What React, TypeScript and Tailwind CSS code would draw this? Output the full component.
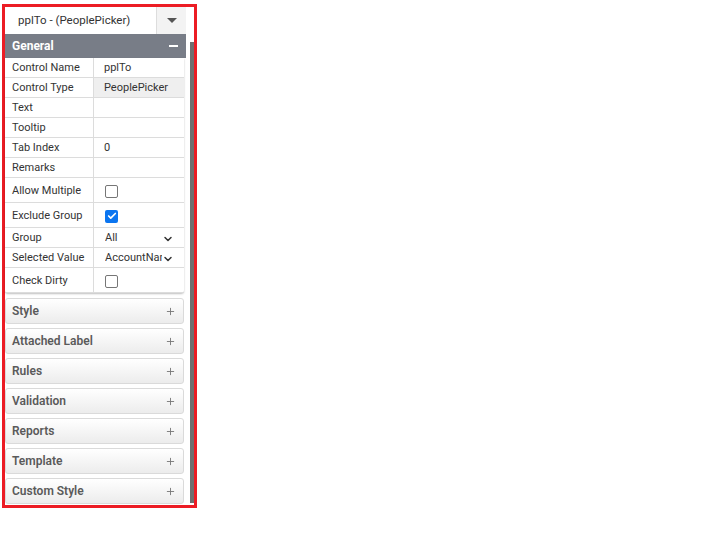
import { Check, ChevronDown, Plus } from 'lucide-react';

type Row = {
  label: string;
  kind: 'text' | 'readonly' | 'check' | 'select';
  value?: string;
  checked?: boolean;
};

const rows: Row[] = [
  { label: 'Control Name', kind: 'text', value: 'pplTo' },
  { label: 'Control Type', kind: 'readonly', value: 'PeoplePicker' },
  { label: 'Text', kind: 'text', value: '' },
  { label: 'Tooltip', kind: 'text', value: '' },
  { label: 'Tab Index', kind: 'text', value: '0' },
  { label: 'Remarks', kind: 'text', value: '' },
  { label: 'Allow Multiple', kind: 'check', checked: false },
  { label: 'Exclude Group', kind: 'check', checked: true },
  { label: 'Group', kind: 'select', value: 'All' },
  { label: 'Selected Value', kind: 'select', value: 'AccountName' },
  { label: 'Check Dirty', kind: 'check', checked: false },
];

const sections = ['Style', 'Attached Label', 'Rules', 'Validation', 'Reports', 'Template', 'Custom Style'];

function Value({ row }: { row: Row }) {
  if (row.kind === 'check') {
    return (
      <div className="flex items-center px-[11px] pt-[2px] h-full">
        {row.checked ? (
          <span className="w-[13px] h-[13px] rounded-[2px] bg-[#0b75f0] flex items-center justify-center">
            <Check size={10} strokeWidth={4} className="text-white" />
          </span>
        ) : (
          <span className="w-[13px] h-[13px] rounded-[2px] border border-[#767676] bg-white" />
        )}
      </div>
    );
  }
  if (row.kind === 'select') {
    return (
      <div className="flex items-center h-full pl-[11px] pr-[10px] pt-[2px]">
        <span className="flex-1 min-w-0 whitespace-nowrap overflow-hidden">{row.value}</span>
        <ChevronDown size={12} strokeWidth={3} className="text-[#333] shrink-0" />
      </div>
    );
  }
  return (
    <div className={`flex items-center h-full px-[10px] pt-[2px] ${row.kind === 'readonly' ? 'bg-[#efefef]' : ''}`}>
      {row.value}
    </div>
  );
}

export default function App() {
  return (
    <div className="pt-[4px] pl-[2px] font-['Roboto',sans-serif]">
      <div className="w-[195px] h-[504px] border-[3px] border-[#ec1c24] bg-white flex">
        <div className="w-[181px] flex flex-col">
          {/* control picker */}
          <div className="h-[27px] flex bg-white">
            <div className="flex-1 flex items-center pl-[13px] text-[11.5px] text-[#333]">pplTo - (PeoplePicker)</div>
            <div className="w-[30px] bg-[#f3f3f3] border-l border-[#ddd] flex items-center justify-center">
              <span className="w-0 h-0 border-l-[5px] border-r-[5px] border-t-[5px] border-l-transparent border-r-transparent border-t-[#555]" />
            </div>
          </div>

          {/* General */}
          <div className="h-[24px] bg-[#787d87] flex items-center justify-between pl-[7px] pr-[8px]">
            <span className="text-white font-bold text-[12px]">General</span>
            <span className="w-[9px] h-[2px] bg-white" />
          </div>
          <div className="rounded-b-[3px] shadow-[0_1px_2px_rgba(0,0,0,0.25)] mr-[2px]">
            {rows.map((row) => (
              <div
                key={row.label}
                className={`flex border-b border-[#dcdcdc] text-[11px] text-[#333] ${row.kind === 'check' ? 'h-[25px]' : 'h-[20px]'}`}
              >
                <div className="w-[89px] shrink-0 border-r border-[#dcdcdc] flex items-center pl-[7px] pt-[2px] whitespace-nowrap">
                  {row.label}
                </div>
                <div className="flex-1 min-w-0">
                  <Value row={row} />
                </div>
              </div>
            ))}
          </div>

          {/* sections */}
          <div className="flex flex-col gap-[4px] mt-[5px] mr-[2px]">
            {sections.map((s) => (
              <div
                key={s}
                className="h-[26px] rounded-[3px] border border-[#dadada] bg-gradient-to-b from-white to-[#ececec] flex items-center justify-between pl-[6px] pr-[7px]"
              >
                <span className="text-[12px] font-semibold text-[#5a5a5a]">{s}</span>
                <Plus size={11} strokeWidth={2} className="text-[#777]" />
              </div>
            ))}
          </div>
        </div>
        <div className="flex-1 flex justify-end">
          <div className="w-[4px] bg-[#6f6f6f] mt-[35px] mb-[2px]" />
        </div>
      </div>
    </div>
  );
}
